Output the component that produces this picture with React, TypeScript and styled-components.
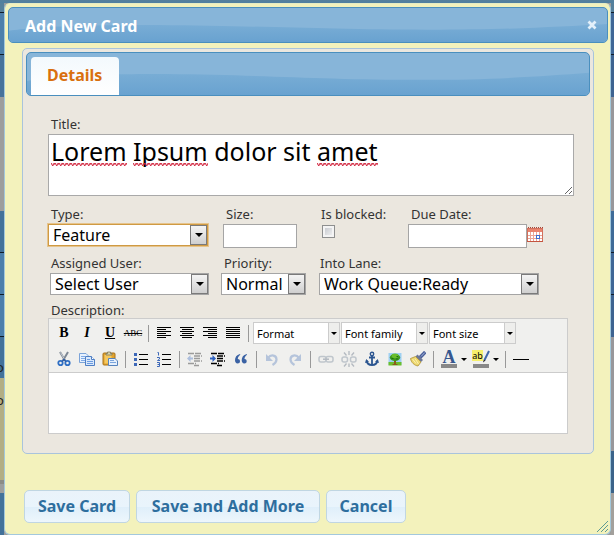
import React, { useState } from 'react';
import styled, { createGlobalStyle, css } from 'styled-components';

const UI_FONT = '"Noto Sans", "Open Sans", sans-serif';

const GlobalStyle = createGlobalStyle`
  * { box-sizing: border-box; }
  body { margin: 0; background: #9d9e9d; font-family: ${UI_FONT}; }
  button, input, select, textarea { font-family: inherit; margin: 0; }
`;

const Page = styled.div`
  position: relative;
  min-height: 100vh;
  padding: 3px 3px 0 4px;
  background:
    linear-gradient(#56809c, #4f7fa0) top / 100% 3px no-repeat,
    linear-gradient(
      #56809c 12px, #111c28 12px 13px, #4c7fab 13px 54px, #111c28 54px 55px, #47739b 55px 97px,
      #9d9e9d 97px 211px, #43729a 211px 252px, #111c28 252px 253px, #4c7fab 253px 294px,
      #111c28 294px 295px, #4c7fab 295px 336px, #111c28 336px 337px, #43729a 337px 378px,
      #b3ae84 378px 480px, #8c8c86 480px 484px, #9d9e9d 484px 493px, #43729a 493px
    ) left / 4px 100% no-repeat,
    linear-gradient(
      #56809c 12px, #111c28 12px 13px, #3f6797 13px 54px, #111c28 54px 55px, #3d6391 55px 97px,
      #98979b 97px 211px, #3f6b98 211px 252px, #111c28 252px 253px, #3f6797 253px 294px,
      #111c28 294px 295px, #3d6391 295px 337px, #98979b 337px 451px, #3b638a 451px 493px, #a3a09c 493px
    ) right / 3px 100% no-repeat;
`;

const Dialog = styled.section`
  position: relative;
  padding: 3px 2px 11px 3px;
  border: 1px solid #a3c8dc;
  border-top-color: #e6edc4;
  border-radius: 6px;
  background: #f3f2bc;
  color: #2b2b2b;
`;

const barSurface = css`
  position: relative;
  overflow: hidden;
  border: 1px solid #4a8fbe;
  border-radius: 5px;
  background: #87b5d9;
`;

const TitleBar = styled.header`
  ${barSurface}
  display: flex;
  align-items: center;
  justify-content: space-between;
  height: 36px;
  padding: 0 9px 0 16px;
`;

const GlossArt = styled.svg`
  position: absolute;
  inset: 0;
  width: 100%;
  height: 100%;
`;

const Heading = styled.h1`
  position: relative;
  margin: 0;
  padding-top: 2px;
  font-size: 16px;
  line-height: 24px;
  font-weight: 700;
  color: #fff;
`;

const CloseButton = styled.button`
  position: relative;
  display: flex;
  padding: 0;
  border: 0;
  background: none;
`;

const TabPanel = styled.div`
  margin: 5px 14px 0;
  padding: 3px;
  border: 1px solid #a9c4dc;
  border-radius: 5px;
  background: #ebe7df;
`;

const TabBar = styled.nav`
  ${barSurface}
  display: flex;
  align-items: flex-end;
  height: 44px;
  padding-left: 4px;
`;

const Tab = styled.button`
  position: relative;
  height: 38px;
  padding: 0 17px 2px 16px;
  border: 0;
  border-radius: 4px 4px 0 0;
  background: linear-gradient(#f3f9fd, #fff);
  color: #d9700f;
  font-size: 16px;
  font-weight: 700;
`;

const Form = styled.form`
  padding: 20px 16px 16px 22px;
`;

const Row = styled.div<{ $columns: string; $gap: number; $indent?: number }>`
  display: grid;
  grid-template-columns: ${p => p.$columns};
  align-items: start;
  margin-top: ${p => p.$gap}px;
  padding-left: ${p => p.$indent ?? 0}px;
`;

const Field = styled.div`
  display: flex;
  flex-direction: column;
  align-items: flex-start;
`;

const Label = styled.label<{ $inset?: number; $tight?: boolean }>`
  height: ${p => (p.$tight ? 16 : 18)}px;
  padding-left: ${p => p.$inset ?? 3}px;
  font-size: 13px;
  line-height: 16px;
  white-space: nowrap;
  color: #333;
`;

const TitleBox = styled.div`
  display: grid;
  width: 100%;
  height: 62px;
  background: #fff;
`;

const titleText = css`
  grid-area: 1 / 1;
  margin: 0;
  padding: 0 2px;
  border: 1px solid #a9a9a9;
  font-size: 25px;
  line-height: 32px;
`;

const TitleInput = styled.textarea`
  ${titleText}
  width: 100%;
  height: 62px;
  background: transparent;
  color: #000;
  resize: vertical;
  outline: 0;
`;

const SpellMarks = styled.div`
  ${titleText}
  border-color: transparent;
  color: transparent;
  pointer-events: none;
`;

const Misspelt = styled.span`
  background-image:
    linear-gradient(45deg, transparent 62%, #d0203a 78%, transparent 92%),
    linear-gradient(135deg, transparent 5%, #d0203a 18%, transparent 30%),
    linear-gradient(135deg, transparent 42%, #d0203a 55%, transparent 68%),
    linear-gradient(45deg, transparent 20%, #d0203a 35%, transparent 50%);
  background-size: 4px 3px;
  background-position: 0 calc(100% - 2px);
  background-repeat: repeat-x;
`;

const TextInput = styled.input<{ $width: number }>`
  width: ${p => p.$width}px;
  height: 24px;
  padding: 1px 3px;
  border: 1px solid #a5a5a5;
  background: #fff;
  font-size: 16px;
`;

const CheckBox = styled.input`
  appearance: none;
  width: 13px;
  height: 13px;
  margin: 1px 0 0 1px;
  border: 1px solid #8e8f8f;
  background: linear-gradient(135deg, #bfc3c9, #f6f6f6);
  box-shadow: inset 0 0 0 2px #f4f4f4;
`;

const DateControl = styled.div`
  display: flex;
  align-items: center;
`;

const PlainButton = styled.button`
  display: flex;
  padding: 0 0 2px;
  border: 0;
  background: none;
`;

const SelectShell = styled.div<{ $width: number; $focused?: boolean }>`
  display: grid;
  align-items: center;
  width: ${p => p.$width}px;
  height: 22px;
  border: 1px solid ${p => (p.$focused ? '#cf9a43' : '#a5a5a5')};
  outline: ${p => (p.$focused ? '1px solid #e6c48c' : '0')};
  background: #fff;
`;

const NativeSelect = styled.select`
  grid-area: 1 / 1;
  appearance: none;
  width: 100%;
  height: 20px;
  padding: 0 18px 0 4px;
  border: 0;
  outline: 0;
  background: transparent;
  color: #000;
  font-size: 16px;
  line-height: 20px;
`;

const SelectArrow = styled.span`
  grid-area: 1 / 1;
  justify-self: end;
  display: flex;
  align-items: center;
  justify-content: center;
  width: 17px;
  height: 20px;
  border: 1px solid #7a7a7a;
  background: linear-gradient(#f4f4f4, #cfcfcf);
  pointer-events: none;
`;

const Editor = styled.div`
  align-self: stretch;
  margin-right: 6px;
  border: 1px solid #ccc;
  background: #fff;
`;

const Toolbar = styled.div`
  display: flex;
  flex-direction: column;
  gap: 4px;
  padding: 3px 4px 2px;
  border-bottom: 1px solid #ccc;
  background: #f0f0ee;
`;

const ToolRow = styled.div`
  display: flex;
  align-items: center;
  gap: 1px;
  height: 22px;
`;

const Tool = styled.button<{ $wide?: boolean; $faded?: boolean }>`
  display: flex;
  align-items: center;
  justify-content: ${p => (p.$wide ? 'flex-start' : 'center')};
  flex: none;
  width: ${p => (p.$wide ? 31 : 22)}px;
  height: 22px;
  padding: ${p => (p.$wide ? '0 0 0 1px' : '0')};
  border: 0;
  background: none;
  color: #000;
  font-family: "Liberation Serif", serif;
  font-size: 14px;
  opacity: ${p => (p.$faded ? 0.35 : 1)};
`;

const Bold = styled.span`
  font-weight: 700;
`;
const Italic = styled.span`
  font-weight: 700;
  font-style: italic;
`;
const Underlined = styled.span`
  font-weight: 700;
  text-decoration: underline;
`;
const Struck = styled.span`
  font-size: 9px;
  text-decoration: line-through;
`;

const Divider = styled.span`
  flex: none;
  width: 1px;
  height: 17px;
  margin: 0 3px;
  background: #999;
`;

const ToolSelect = styled.div`
  display: grid;
  width: 87px;
  height: 22px;
  border: 1px solid #ccc;
  background: #fff;
`;

const ToolSelectInput = styled.select`
  grid-area: 1 / 1;
  appearance: none;
  width: 100%;
  padding: 0 10px 0 3px;
  border: 0;
  background: transparent;
  color: #000;
  font-size: 11px;
`;

const ToolSelectArrow = styled.span`
  grid-area: 1 / 1;
  justify-self: end;
  display: flex;
  align-items: center;
  justify-content: center;
  width: 11px;
  border-left: 1px solid #ccc;
  background: #eeeeec;
  pointer-events: none;
`;

const EditorBody = styled.textarea`
  display: block;
  width: 100%;
  height: 60px;
  padding: 6px;
  border: 0;
  outline: 0;
  resize: none;
  background: #fff;
`;

const Actions = styled.footer`
  display: grid;
  grid-template-columns: 106px 184px 80px;
  gap: 6px;
  margin: 36px 16px 0;
`;

const ActionButton = styled.button`
  height: 33px;
  padding: 0 0 1px;
  border: 1px solid #c0d6e2;
  border-radius: 5px;
  background: linear-gradient(#eaf3fa, #e9f4fc 50%, #dfeffa 52%, #edf6fc);
  color: #2e6e9e;
  font-size: 16px;
  line-height: 24px;
  font-weight: 700;
  white-space: nowrap;
`;

const ResizeGrip = styled.svg`
  position: absolute;
  right: 2px;
  bottom: 2px;
`;

const BoardText = styled.span<{ $top: number }>`
  position: absolute;
  left: -4px;
  top: ${p => p.$top}px;
  font-size: 13px;
  line-height: 16px;
  color: #222;
`;

function Gloss() {
  return (
    <GlossArt viewBox="0 0 600 36" preserveAspectRatio="none" aria-hidden="true">
      <defs>
        <linearGradient id="gloss" x1="0" y1="0" x2="0" y2="1">
          <stop offset="0" stopColor="#79add5" />
          <stop offset="1" stopColor="#69a2d0" />
        </linearGradient>
      </defs>
      <path d="M0 24C30 20 60 18 150 18C260 19 320 23 420 23C500 23 550 20 600 17V36H0Z" fill="url(#gloss)" />
    </GlossArt>
  );
}

function Triangle({ size = 8 }: { size?: number }) {
  return (
    <svg width={size} height={size / 2} viewBox="0 0 8 4" aria-hidden="true">
      <path d="M0 0H8L4 4Z" fill="#000" />
    </svg>
  );
}

function Dropdown(props: { id: string; width: number; options: string[]; focused?: boolean }) {
  return (
    <SelectShell $width={props.width} $focused={props.focused}>
      <NativeSelect id={props.id}>
        {props.options.map(o => (
          <option key={o}>{o}</option>
        ))}
      </NativeSelect>
      <SelectArrow>
        <Triangle />
      </SelectArrow>
    </SelectShell>
  );
}

function ToolDropdown({ name }: { name: string }) {
  return (
    <ToolSelect>
      <ToolSelectInput aria-label={name}>
        <option>{name}</option>
      </ToolSelectInput>
      <ToolSelectArrow>
        <Triangle size={6} />
      </ToolSelectArrow>
    </ToolSelect>
  );
}

function Icon({ children, size = 16 }: { children: React.ReactNode; size?: number }) {
  return (
    <svg width={size} height={size} viewBox={`0 0 ${size} ${size}`} aria-hidden="true">
      {children}
    </svg>
  );
}

const ALIGN_PATHS: Record<string, string> = {
  'Align left': 'M1 2.5H15M1 4.5H10M1 6.5H15M1 8.5H10M1 10.5H15M1 12.5H10',
  'Align center': 'M1 2.5H15M3 4.5H13M1 6.5H15M3 8.5H13M1 10.5H15M3 12.5H13',
  'Align right': 'M1 2.5H15M6 4.5H15M1 6.5H15M6 8.5H15M1 10.5H15M6 12.5H15',
  'Align full': 'M1 2.5H15M1 4.5H15M1 6.5H15M1 8.5H15M1 10.5H15M1 12.5H15',
};

const CutIcon = () => (
  <Icon>
    <path d="M4 1L9 9.5M12 1L7 9.5" stroke="#7d8794" strokeWidth="2" />
    <path d="M4.500 1.500L8 7.500" stroke="#c5ccd5" strokeWidth="1" />
    <circle cx="4.500" cy="12" r="2.200" fill="none" stroke="#2f6fc4" strokeWidth="1.800" />
    <circle cx="11.500" cy="12" r="2.200" fill="none" stroke="#2f6fc4" strokeWidth="1.800" />
    <path d="M6 10.500L8 8.500L10 10.500" fill="none" stroke="#2a5ca8" strokeWidth="1.500" />
  </Icon>
);

const CopyIcon = () => (
  <Icon>
    <path d="M.5 2.500H7L9.500 5V11.500H.5Z" fill="#e7f1fd" stroke="#7ba3d8" />
    <path d="M2 5.500H6M2 7.500H6M2 9.500H6" stroke="#7faae6" />
    <path d="M6.500 5.500H12.500L15.500 8.500V14.500H6.500Z" fill="#d8e8fb" stroke="#4f7fc4" />
    <path d="M12.500 5.500V8.500H15.500" fill="#fff" stroke="#4f7fc4" />
    <path d="M8 8.500H11M8 10.500H14M8 12.500H14" stroke="#6c9be0" />
  </Icon>
);

const PasteIcon = () => (
  <Icon>
    <rect x="1" y="2" width="12" height="12" rx="1" fill="#e0a32e" stroke="#a8731a" />
    <rect x="2.500" y="4" width="7" height="8.500" fill="#f5c85e" />
    <path d="M4 4V2.500H5.500V1H8.500V2.500H10V4Z" fill="#d8d3ae" stroke="#7c7656" strokeWidth=".8" />
    <path d="M6.500 7.500H13L15.500 10V14.500H6.500Z" fill="#e6f0fc" stroke="#5683bd" />
    <path d="M8 9.500H12M8 11.500H14" stroke="#7ba5dc" />
  </Icon>
);

const BulletIcon = () => (
  <Icon>
    <path d="M6 3.500H15M6 8.500H15M6 13.500H15" stroke="#000" />
    <path d="M1 2H4V5H1ZM1 7H4V10H1ZM1 12H4V15H1Z" fill="#3d68b8" />
  </Icon>
);

const NumberIcon = () => (
  <Icon>
    <path d="M6 3.500H15M6 8.500H15M6 13.500H15" stroke="#000" />
    <path
      d="M1.500 1.500H2.500V4.500M1 6.500H3.500V8L1.500 9.500H4M1 11.500H3.500V15.500H1M1.500 13.500H3.500"
      fill="none"
      stroke="#3d68b8"
    />
  </Icon>
);

const IndentIcon = ({ outward }: { outward?: boolean }) => (
  <Icon>
    <path d="M1 2.500H15M7 5H15M7 7.500H13M7 10H15M1 12.500H9M7 14.500H12" stroke="#000" strokeWidth="1.300" strokeDasharray="6 1" />
    <path
      d={outward ? 'M0 7.500L3.500 4V6.500H6V8.500H3.500V11Z' : 'M6 7.500L2.500 4V6.500H0V8.500H2.500V11Z'}
      fill="#2f62c0"
    />
  </Icon>
);

const QuoteIcon = () => (
  <Icon>
    <path
      d="M7 3C3.500 4 2 6.200 2 9.300C2 11.300 3 12.500 4.600 12.500C6 12.500 7 11.500 7 10.200C7 8.900 6 8 4.800 8C4.900 6.300 5.600 5 7.300 3.800ZM13.700 3C10.200 4 8.700 6.200 8.700 9.300C8.700 11.300 9.700 12.500 11.300 12.500C12.700 12.500 13.700 11.500 13.700 10.200C13.700 8.900 12.700 8 11.500 8C11.600 6.300 12.300 5 14 3.800Z"
      fill="#3a62a4"
    />
  </Icon>
);

const UndoIcon = () => (
  <Icon>
    <path d="M4 7C7 3 12.500 4 12.500 8.500C12.500 11 11 12.500 8.500 14" fill="none" stroke="#4a74b8" strokeWidth="2.200" />
    <path d="M2 3V10H9Z" fill="#4a74b8" />
  </Icon>
);

const RedoIcon = () => (
  <Icon>
    <path d="M12 7C9 3 3.500 4 3.500 8.500C3.500 11 5 12.500 7.500 14" fill="none" stroke="#4a74b8" strokeWidth="2.200" />
    <path d="M14 3V10H7Z" fill="#4a74b8" />
  </Icon>
);

const LinkIcon = () => (
  <Icon>
    <rect x="1" y="5.500" width="7" height="5.500" rx="2" fill="none" stroke="#67798f" strokeWidth="1.500" />
    <rect x="8" y="5.500" width="7" height="5.500" rx="2" fill="none" stroke="#67798f" strokeWidth="1.500" />
    <path d="M5 8.200H11" stroke="#45566d" strokeWidth="1.500" />
  </Icon>
);

const UnlinkIcon = () => (
  <Icon>
    <rect x="1" y="6" width="5.500" height="5" rx="2" fill="none" stroke="#67798f" strokeWidth="1.500" />
    <rect x="9.500" y="6" width="5.500" height="5" rx="2" fill="none" stroke="#67798f" strokeWidth="1.500" />
    <path d="M3 1.500L5.500 4.500M8 0V4M13 1.500L10.500 4.500M3 15.500L5.500 12.500M8 16V12.500M13 15.500L10.500 12.500" stroke="#45566d" strokeWidth="1.300" />
  </Icon>
);

const AnchorIcon = () => (
  <Icon>
    <circle cx="8" cy="3" r="1.700" fill="none" stroke="#2b5590" strokeWidth="1.400" />
    <path d="M8 4.500V14M5 6.500H11" stroke="#2b5590" strokeWidth="1.800" />
    <path d="M2.500 9.500C3 12.500 5 14 8 14.200C11 14 13 12.500 13.500 9.500" fill="none" stroke="#2b5590" strokeWidth="1.800" />
    <path d="M1 12L2.300 8L5 11ZM15 12L13.700 8L11 11Z" fill="#2b5590" />
  </Icon>
);

const TreeIcon = () => (
  <Icon>
    <rect x="1.500" y="2" width="13" height="12" fill="#9fd0f2" />
    <rect x="1.500" y="11" width="13" height="3.500" fill="#6bbf2c" />
    <path d="M7 8H9V13H10.500V14H5.500V13H7Z" fill="#8a5a1c" />
    <ellipse cx="8" cy="6.500" rx="5.200" ry="3.500" fill="#3c9a1c" />
    <ellipse cx="8" cy="4.800" rx="3.400" ry="2.400" fill="#69bd2b" />
    <path d="M4.500 7.500H6.500M9 8H11M9.500 5.500H11" stroke="#1f6d12" />
  </Icon>
);

const BrushIcon = () => (
  <Icon>
    <path d="M15.300 1L10 6.500" stroke="#4a5f9a" strokeWidth="3.400" />
    <path d="M14.800 1.500L11 5.500" stroke="#a8b8dc" strokeWidth="1" />
    <path d="M7.500 3.500L13 9L11 11L5.500 5.500Z" fill="#6d7896" />
    <path d="M5.500 5.500L11 11L8 15C4.500 14.500 1 11.500 .5 7.500Z" fill="#ecd66c" stroke="#a3852b" strokeWidth=".7" />
    <path d="M5 7.500L8.500 13M2.500 8L6 12.500" stroke="#fbf2b0" />
  </Icon>
);

const Swatch = styled.span`
  width: 16px;
  height: 4px;
  background: #888;
`;

const SplitFace = styled.span`
  display: flex;
  flex-direction: column;
  align-items: center;
  width: 20px;
  margin-right: 2px;
`;

const ForeGlyph = styled.span`
  height: 14px;
  color: #35578f;
  font-size: 18px;
  line-height: 15px;
  font-weight: 700;
`;

const BackGlyph = styled.span`
  display: flex;
  align-items: flex-start;
  height: 14px;
`;

const MarkedText = styled.span`
  height: 11px;
  background: #f7f06c;
  font-family: "Noto Sans", sans-serif;
  font-size: 9px;
  line-height: 11px;
`;

function CalendarIcon() {
  return (
    <Icon>
      <rect x=".5" y="1.500" width="15" height="13" fill="#fff" stroke="#d2705d" />
      <path d="M1 2H15V5H1Z" fill="#e9836d" />
      <path d="M1 .5H16" stroke="#a14a3c" strokeDasharray="1 1" />
      <path d="M1 8.500H15M1 11.500H15M3.500 5V14M6.500 5V14M9.500 5V14M12.500 5V14" stroke="#eaa496" />
      <rect x="9.500" y="8.500" width="3" height="3" fill="#fff" stroke="#3b6fd0" />
      <path d="M0 14.500H16" stroke="#c4543f" />
    </Icon>
  );
}

export default function App() {
  const [title, setTitle] = useState('Lorem Ipsum dolor sit amet');
  return (
    <>
      <GlobalStyle />
      <Page>
        <BoardText $top={359}>o</BoardText>
        <BoardText $top={392}>o</BoardText>
        <Dialog role="dialog" aria-labelledby="dialog-title">
          <TitleBar>
            <Gloss />
            <Heading id="dialog-title">Add New Card</Heading>
            <CloseButton type="button" aria-label="Close">
              <svg width="12" height="10" viewBox="0 0 12 10" aria-hidden="true">
                <path d="M2.500 1.500L9.500 8.500M9.500 1.500L2.500 8.500" stroke="#e3f0fa" strokeWidth="2.800" />
              </svg>
            </CloseButton>
          </TitleBar>

          <TabPanel>
            <TabBar>
              <Gloss />
              <Tab type="button">Details</Tab>
            </TabBar>

            <Form>
              <Field>
                <Label htmlFor="title">Title:</Label>
                <TitleBox>
                  <TitleInput id="title" spellCheck={false} value={title} onChange={e => setTitle(e.target.value)} />
                  <SpellMarks aria-hidden="true">
                    <Misspelt>Lorem</Misspelt> <Misspelt>Ipsum</Misspelt> dolor sit <Misspelt>amet</Misspelt>
                  </SpellMarks>
                </TitleBox>
              </Field>

              <Row $columns="175px 98px 87px 1fr" $gap={10}>
                <Field>
                  <Label htmlFor="type">Type:</Label>
                  <Dropdown id="type" width={160} options={['Feature']} focused />
                </Field>
                <Field>
                  <Label htmlFor="size">Size:</Label>
                  <TextInput id="size" $width={74} />
                </Field>
                <Field>
                  <Label htmlFor="blocked" $inset={0}>Is blocked:</Label>
                  <CheckBox id="blocked" type="checkbox" />
                </Field>
                <Field>
                  <Label htmlFor="due">Due Date:</Label>
                  <DateControl>
                    <TextInput id="due" $width={119} />
                    <PlainButton type="button" aria-label="Choose date">
                      <CalendarIcon />
                    </PlainButton>
                  </DateControl>
                </Field>
              </Row>

              <Row $columns="171px 98px 1fr" $gap={7} $indent={2}>
                <Field>
                  <Label htmlFor="user" $inset={1}>Assigned User:</Label>
                  <Dropdown id="user" width={159} options={['Select User']} />
                </Field>
                <Field>
                  <Label htmlFor="priority">Priority:</Label>
                  <Dropdown id="priority" width={85} options={['Normal']} />
                </Field>
                <Field>
                  <Label htmlFor="lane" $inset={1}>Into Lane:</Label>
                  <Dropdown id="lane" width={220} options={['Work Queue:Ready']} />
                </Field>
              </Row>

              <Row $columns="1fr" $gap={7}>
                <Field>
                  <Label htmlFor="description" $tight>Description:</Label>
                  <Editor>
                    <Toolbar role="toolbar" aria-label="Formatting">
                      <ToolRow>
                        <Tool type="button"><Bold>B</Bold></Tool>
                        <Tool type="button"><Italic>I</Italic></Tool>
                        <Tool type="button"><Underlined>U</Underlined></Tool>
                        <Tool type="button"><Struck>ABC</Struck></Tool>
                        <Divider />
                        {Object.entries(ALIGN_PATHS).map(([name, d]) => (
                          <Tool key={name} type="button" aria-label={name}>
                            <Icon><path d={d} stroke="#000" /></Icon>
                          </Tool>
                        ))}
                        <Divider />
                        <ToolDropdown name="Format" />
                        <ToolDropdown name="Font family" />
                        <ToolDropdown name="Font size" />
                      </ToolRow>
                      <ToolRow>
                        <Tool type="button" aria-label="Cut"><CutIcon /></Tool>
                        <Tool type="button" aria-label="Copy"><CopyIcon /></Tool>
                        <Tool type="button" aria-label="Paste"><PasteIcon /></Tool>
                        <Divider />
                        <Tool type="button" aria-label="Bulleted list"><BulletIcon /></Tool>
                        <Tool type="button" aria-label="Numbered list"><NumberIcon /></Tool>
                        <Divider />
                        <Tool type="button" aria-label="Outdent" $faded><IndentIcon outward /></Tool>
                        <Tool type="button" aria-label="Indent"><IndentIcon /></Tool>
                        <Tool type="button" aria-label="Quote"><QuoteIcon /></Tool>
                        <Divider />
                        <Tool type="button" aria-label="Undo" $faded><UndoIcon /></Tool>
                        <Tool type="button" aria-label="Redo" $faded><RedoIcon /></Tool>
                        <Divider />
                        <Tool type="button" aria-label="Link" $faded><LinkIcon /></Tool>
                        <Tool type="button" aria-label="Unlink" $faded><UnlinkIcon /></Tool>
                        <Tool type="button" aria-label="Anchor"><AnchorIcon /></Tool>
                        <Tool type="button" aria-label="Image"><TreeIcon /></Tool>
                        <Tool type="button" aria-label="Clean up"><BrushIcon /></Tool>
                        <Divider />
                        <Tool type="button" aria-label="Text colour" $wide>
                          <SplitFace><ForeGlyph>A</ForeGlyph><Swatch /></SplitFace>
                          <Triangle size={6} />
                        </Tool>
                        <Tool type="button" aria-label="Highlight colour" $wide>
                          <SplitFace>
                            <BackGlyph>
                              <MarkedText>ab</MarkedText>
                              <svg width="7" height="13" viewBox="0 0 7 13" aria-hidden="true">
                                <path d="M6 1L1.500 10" stroke="#3f66a8" strokeWidth="2" />
                                <path d="M0 12.500L.8 9.500L2.500 10.500Z" fill="#222" />
                              </svg>
                            </BackGlyph>
                            <Swatch />
                          </SplitFace>
                          <Triangle size={6} />
                        </Tool>
                        <Divider />
                        <Tool type="button" aria-label="Horizontal rule">
                          <Icon><path d="M0 8.500H16" stroke="#000" /></Icon>
                        </Tool>
                      </ToolRow>
                    </Toolbar>
                    <EditorBody id="description" />
                  </Editor>
                </Field>
              </Row>
            </Form>
          </TabPanel>

          <Actions>
            <ActionButton type="button">Save Card</ActionButton>
            <ActionButton type="button">Save and Add More</ActionButton>
            <ActionButton type="button">Cancel</ActionButton>
          </Actions>
          <ResizeGrip width="12" height="12" viewBox="0 0 12 12" aria-hidden="true">
            <path d="M1 12L12 1M5 12L12 5M9 12L12 9" stroke="#5d9a93" />
          </ResizeGrip>
        </Dialog>
      </Page>
    </>
  );
}
